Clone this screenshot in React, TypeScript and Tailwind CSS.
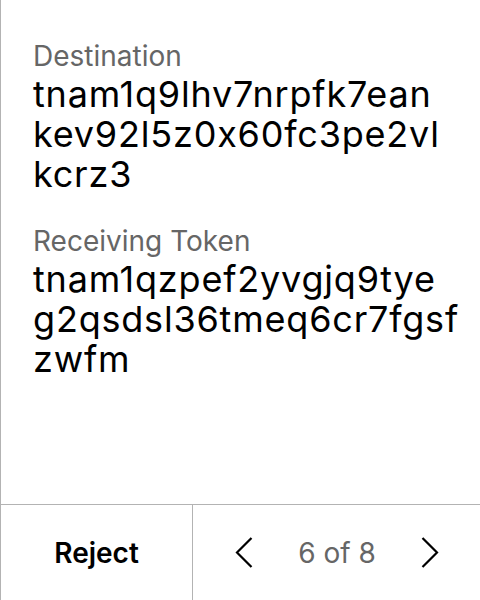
import * as React from 'react';

// address lines as the device wraps them
const fields = [
  { label: 'Destination', lines: ['tnam1q9lhv7nrpfk7ean', 'kev92l5z0x60fc3pe2vl', 'kcrz3'] },
  { label: 'Receiving Token', lines: ['tnam1qzpef2yvgjq9tye', 'g2qsdsl36tmeq6cr7fgsf', 'zwfm'] },
];

const Chevron: React.FC<{ dir: 'left' | 'right' }> = ({ dir }) => (
  <svg width="18" height="31" viewBox="0 0 18 31" fill="none" stroke="#000" strokeWidth="2.2">
    {dir === 'left' ? <path d="M16.5 1 L2 15.5 L16.5 30" /> : <path d="M1.5 1 L16 15.5 L1.5 30" />}
  </svg>
);

export default function App() {
  return (
    <div
      className="h-[600px] w-[480px] bg-white flex flex-col border-l border-[#b3b3b3]"
      style={{ fontFamily: 'Inter, "Noto Sans", sans-serif' }}
    >
      <div className="flex-1 pl-[32px] pt-[38px] flex flex-col gap-[29px]">
        {fields.map((f) => (
          <div key={f.label}>
            <div className="text-[28px] leading-[36px] text-[#666666]">{f.label}</div>
            <div className="text-[36px] leading-[40px] tracking-[0.8px] text-black whitespace-nowrap">
              {f.lines.map((l) => (
                <div key={l}>{l}</div>
              ))}
            </div>
          </div>
        ))}
      </div>
      <div className="h-[96px] border-t border-[#b3b3b3] flex">
        <button className="w-[191px] flex items-center justify-center text-[28px] font-semibold text-black">
          Reject
        </button>
        <div className="flex-1 border-l border-[#b3b3b3] flex items-center justify-between pl-[42px] pr-[41px]">
          <Chevron dir="left" />
          <span className="text-[28px] text-[#666666]">6 of 8</span>
          <Chevron dir="right" />
        </div>
      </div>
    </div>
  );
}
